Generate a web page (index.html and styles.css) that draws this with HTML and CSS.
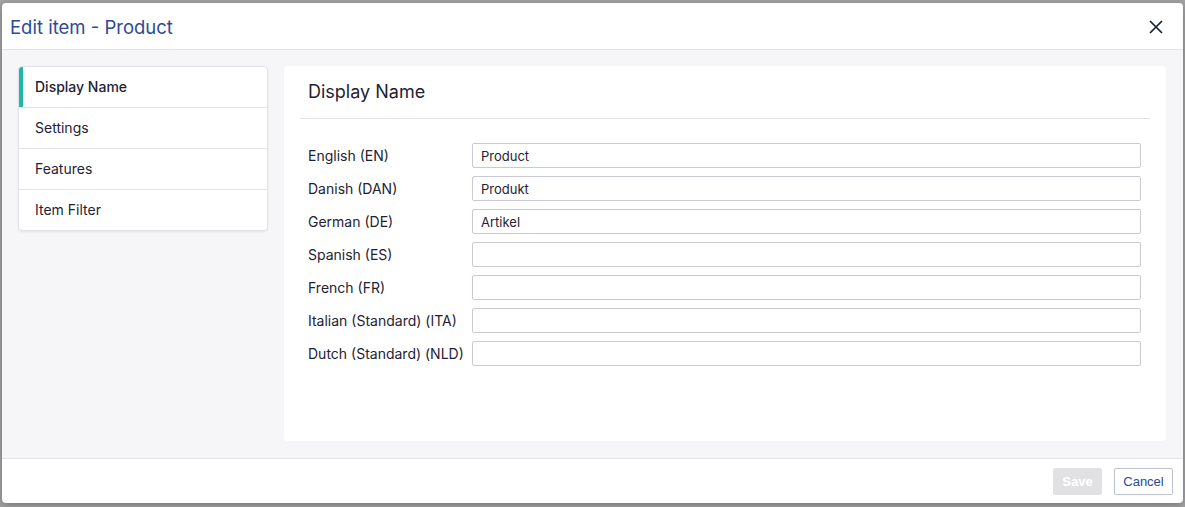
FILE: index.html
```html
<!DOCTYPE html>
<html lang="en">
<head>
  <meta charset="UTF-8" />
  <title>Edit item - Product</title>
  <link rel="stylesheet" href="styles.css">
</head>
<body>
  <div class="modal">
    <div class="modal-header">
      <h1>Edit item - Product</h1>
      <button class="close" title="Close">
        <svg width="14" height="14" viewBox="0 0 14 14"><path d="M1 1 L13 13 M13 1 L1 13" stroke="#1d2233" stroke-width="1.7" fill="none"/></svg>
      </button>
    </div>

    <div class="modal-body">
      <ul class="tabs">
        <li class="active">Display Name</li>
        <li>Settings</li>
        <li>Features</li>
        <li>Item Filter</li>
      </ul>

      <div class="panel">
        <h2>Display Name</h2>
        <div class="form">
          <label>English (EN)</label><input type="text" value="Product">
          <label>Danish (DAN)</label><input type="text" value="Produkt">
          <label>German (DE)</label><input type="text" value="Artikel">
          <label>Spanish (ES)</label><input type="text">
          <label>French (FR)</label><input type="text">
          <label>Italian (Standard) (ITA)</label><input type="text">
          <label>Dutch (Standard) (NLD)</label><input type="text">
        </div>
      </div>
    </div>

    <div class="modal-footer">
      <button class="btn save" disabled>Save</button>
      <button class="btn cancel">Cancel</button>
    </div>
  </div>
</body>
</html>
```

FILE: styles.css
```css
:root {
  --blue: #2b4a96;
  --teal: #1db8a6;
  --line: #e2e3e8;
  --text: #1f2233;
  --input-border: #c9cad4;
}

body {
  margin: 0;
  background-color: #a4a4a6;
  font-family: Inter, 'Noto Sans', sans-serif;
  color: var(--text);
  height: 507px;
  overflow: hidden;
}

.modal {
  margin: 3px 0 0 2px;
  width: 1181px;
  height: 500px;
  background: #fff;
  border-radius: 4px;
  box-shadow: 0 2px 8px rgba(0, 0, 0, 0.3);
  display: flex;
  flex-direction: column;
  overflow: hidden;
}

.modal-header {
  height: 47px;
  box-sizing: border-box;
  padding: 2px 20px 0 8px;
  border-bottom: 1px solid var(--line);
  display: flex;
  align-items: center;
  justify-content: space-between;
}

.modal-header h1 {
  margin: 0;
  font-size: 18.5px;
  font-weight: 400;
  color: var(--blue);
}

.close {
  background: none;
  border: none;
  padding: 0;
  width: 14px;
  height: 14px;
  cursor: pointer;
  display: flex;
}

.modal-body {
  flex: 1;
  background: #f6f6f8;
  padding: 16px 17px 17px 16px;
  display: flex;
  gap: 16px;
  align-items: flex-start;
}

.tabs {
  list-style: none;
  margin: 0;
  padding: 0;
  width: 248px;
  background: #fff;
  border: 1px solid var(--line);
  border-radius: 4px;
  box-shadow: 0 1px 2px rgba(0, 0, 0, 0.08);
  overflow: hidden;
}

.tabs li {
  height: 40px;
  line-height: 40px;
  padding-left: 16px;
  font-size: 14px;
  border-top: 1px solid var(--line);
  cursor: pointer;
}

.tabs li:first-child {
  border-top: none;
}

.tabs li.active {
  box-shadow: inset 4px 0 0 var(--teal);
  font-weight: 500;
}

.panel {
  flex: 1;
  align-self: stretch;
  background: #fff;
  border-radius: 4px;
  padding: 15px 16px 16px;
}

.panel h2 {
  margin: 0 0 24px;
  padding: 0 8px 16px;
  font-size: 18px;
  line-height: 21px;
  font-weight: 400;
  border-bottom: 1px solid var(--line);
}

.form {
  display: grid;
  grid-template-columns: 164px 1fr;
  row-gap: 8px;
  align-items: center;
  padding: 0 9px 0 8px;
}

.form label {
  font-size: 14px;
}

.form input {
  height: 25px;
  box-sizing: border-box;
  border: 1px solid var(--input-border);
  border-radius: 2px;
  padding: 0 8px;
  font-family: Inter, 'Noto Sans', sans-serif;
  font-size: 13px;
  color: var(--text);
}

.modal-footer {
  height: 44px;
  border-top: 1px solid var(--line);
  display: flex;
  justify-content: flex-end;
  align-items: center;
  gap: 12px;
  padding: 0 10px;
}

.btn {
  height: 27px;
  padding: 0 8px;
  font-family: 'Liberation Sans', Arial, sans-serif;
  font-size: 13px;
  border-radius: 2px;
  cursor: pointer;
}

.save {
  width: 49px;
  background: #e1e1e3;
  border: 1px solid #e1e1e3;
  color: #fff;
  font-weight: bold;
}

.cancel {
  width: 59px;
  background: #fff;
  border: 1px solid #bfc2d2;
  color: var(--blue);
}
```
